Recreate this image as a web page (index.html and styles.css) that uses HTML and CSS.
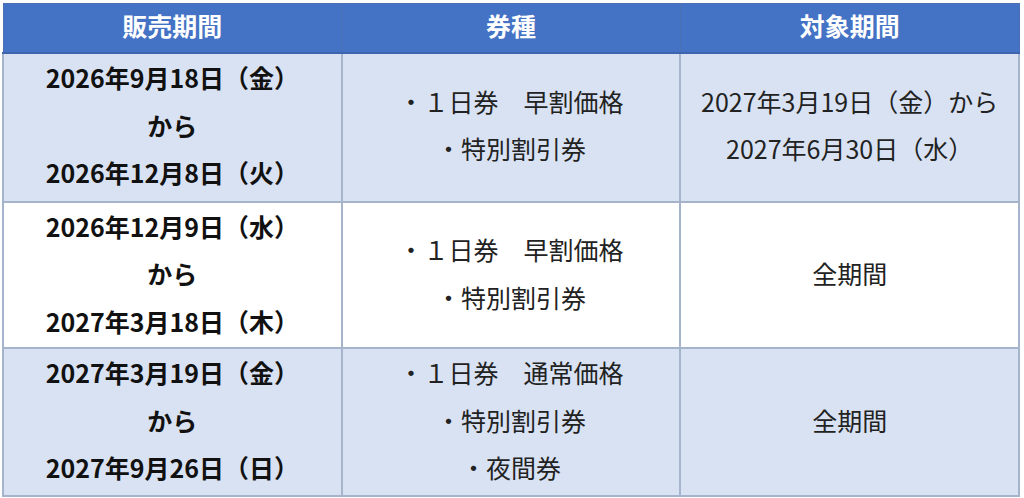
FILE: index.html
```html
<!DOCTYPE html>
<html lang="ja">
<head>
<meta charset="utf-8">
<link rel="stylesheet" href="styles.css">
</head>
<body>
<table class="sched">
  <thead>
    <tr>
      <th>販売期間</th>
      <th>券種</th>
      <th>対象期間</th>
    </tr>
  </thead>
  <tbody>
    <tr class="r1 shade">
      <td class="period">2026年9月18日（金）<br>から<br>2026年12月8日（火）</td>
      <td class="kind">・１日券　早割価格<br>・特別割引券</td>
      <td class="target">2027年3月19日（金）から<br>2027年6月30日（水）</td>
    </tr>
    <tr class="r2">
      <td class="period">2026年12月9日（水）<br>から<br>2027年3月18日（木）</td>
      <td class="kind">・１日券　早割価格<br>・特別割引券</td>
      <td class="target">全期間</td>
    </tr>
    <tr class="r3 shade">
      <td class="period">2027年3月19日（金）<br>から<br>2027年9月26日（日）</td>
      <td class="kind">・１日券　通常価格<br>・特別割引券<br>・夜間券</td>
      <td class="target">全期間</td>
    </tr>
  </tbody>
</table>
</body>
</html>
```

FILE: styles.css
```css
html, body {
  margin: 0;
  padding: 0;
  background: #ffffff;
}
body {
  font-family: "Noto Sans CJK JP", "Noto Sans", sans-serif;
  color: #1a1a1a;
  padding: 3px 4px 0 2px;
}
.sched {
  width: 1018px;
  border-collapse: collapse;
  table-layout: fixed;
  font-size: 25px;
}
.sched th {
  background: #4472c4;
  color: #ffffff;
  font-weight: 700;
  height: 42px;
  padding: 0 0 6px;
  line-height: 30px;
  text-align: center;
  border: 1px solid #4a6fb5;
  border-bottom: 2px solid #3e64ad;
}
.sched td {
  text-align: center;
  vertical-align: middle;
  line-height: 47.5px;
  border: 2px solid #a5b3cb;
  white-space: nowrap;
}
.sched .shade td {
  background: #d9e2f3;
}
.r1 td { padding: 0 0 4px; }
.r2 td { padding: 0 0 2px; }
.r3 td { padding: 0 0 3px; }
.period {
  font-weight: 700;
  color: #111111;
}
.kind, .target {
  font-weight: 400;
  color: #222222;
}
```
